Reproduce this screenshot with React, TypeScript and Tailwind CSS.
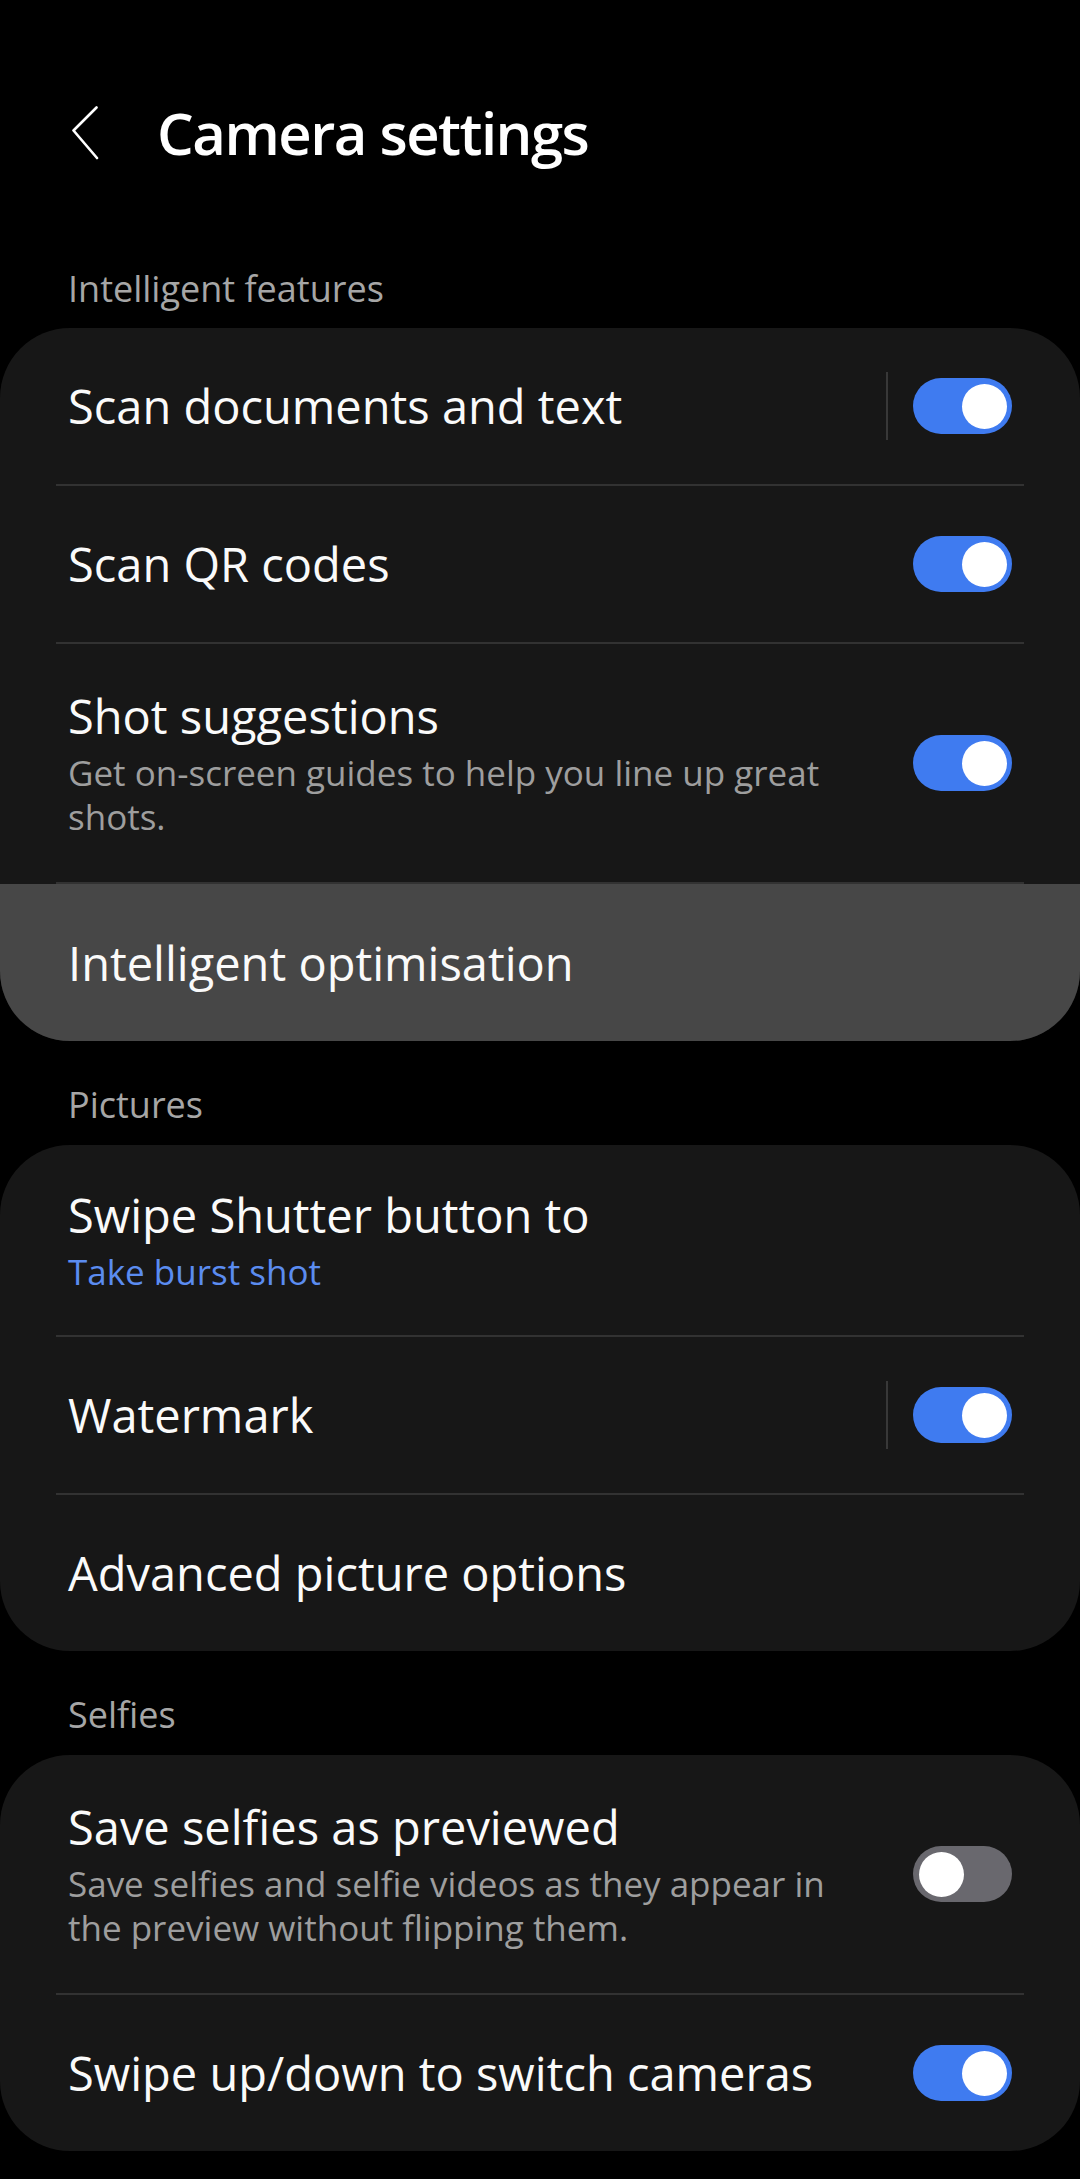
import React from "react";

function Toggle({ on }: { on: boolean }) {
  return on ? (
    <div className="flex h-[56px] w-[99px] shrink-0 items-center justify-end rounded-full bg-[#3f7bf0] pr-[5px]">
      <div className="h-[45px] w-[45px] rounded-full bg-white" />
    </div>
  ) : (
    <div className="flex h-[56px] w-[99px] shrink-0 items-center justify-start rounded-full bg-[#69686e] pl-[6px]">
      <div className="h-[45px] w-[45px] rounded-full bg-white" />
    </div>
  );
}

function Divider() {
  return <div className="mx-[56px] h-[2px] bg-[#323232]" />;
}

function Header({ children, first }: { children: React.ReactNode; first?: boolean }) {
  return (
    <div
      className={
        first
          ? "px-[68px] pt-[98px] pb-[17px] text-[36px] leading-[44px] text-[#a6a6a6]"
          : "px-[68px] pt-[42px] pb-[18px] text-[36px] leading-[44px] text-[#a6a6a6]"
      }
    >
      {children}
    </div>
  );
}

function Row({
  title,
  sub,
  subBlue,
  toggle,
  sep,
  h,
  highlight,
}: {
  title: string;
  sub?: string[];
  subBlue?: string;
  toggle?: boolean;
  sep?: boolean;
  h: string;
  highlight?: boolean;
}) {
  return (
    <div className={`flex items-center px-[68px] ${h} ${highlight ? "bg-[#474747]" : ""}`}>
      <div className="flex min-w-0 flex-1 flex-col">
        <div className="text-[47px] leading-[56px] text-[#fafafa] whitespace-nowrap">{title}</div>
        {sub && (
          <div className="mt-[7px] text-[35px] leading-[44px] text-[#9e9e9e]">
            {sub.map((l) => (
              <div key={l} className="whitespace-nowrap">
                {l}
              </div>
            ))}
          </div>
        )}
        {subBlue && (
          <div className="mt-[7px] text-[35px] leading-[44px] text-[#5b8cf0] whitespace-nowrap">{subBlue}</div>
        )}
      </div>
      {sep && <div className="mr-[25px] h-[68px] w-[2px] bg-[#383838]" />}
      {toggle !== undefined && <Toggle on={toggle} />}
    </div>
  );
}

export default function App() {
  return (
    <div
      className="min-h-[2179px] w-[1080px] bg-black pt-[97px] pb-[30px]"
      style={{ fontFamily: '"Open Sans", "Noto Sans", sans-serif' }}
    >
      <div className="flex h-[72px] items-center pl-[72px]">
        <svg width="27" height="54" viewBox="0 0 27 54" fill="none" className="shrink-0">
          <path d="M24.5 1.5 L1.5 24.5 L25 52" stroke="#ffffff" strokeWidth="2.6" strokeLinecap="round" strokeLinejoin="round" />
        </svg>
        <div className="ml-[58px] text-[58px] font-semibold leading-[72px] tracking-[-1.5px] text-white whitespace-nowrap">
          Camera settings
        </div>
      </div>

      <Header first>Intelligent features</Header>
      <div className="overflow-hidden rounded-[70px] bg-[#171717]">
        <Row title="Scan documents and text" toggle={true} sep h="h-[156px]" />
        <Divider />
        <Row title="Scan QR codes" toggle={true} h="h-[156px]" />
        <Divider />
        <Row
          title="Shot suggestions"
          sub={["Get on-screen guides to help you line up great", "shots."]}
          toggle={true}
          h="h-[238px]"
        />
        <Divider />
        <Row title="Intelligent optimisation" h="h-[157px]" highlight />
      </div>

      <Header>Pictures</Header>
      <div className="overflow-hidden rounded-[70px] bg-[#171717]">
        <Row title="Swipe Shutter button to" subBlue="Take burst shot" h="h-[190px]" />
        <Divider />
        <Row title="Watermark" toggle={true} sep h="h-[156px]" />
        <Divider />
        <Row title="Advanced picture options" h="h-[156px]" />
      </div>

      <Header>Selfies</Header>
      <div className="overflow-hidden rounded-[70px] bg-[#171717]">
        <Row
          title="Save selfies as previewed"
          sub={["Save selfies and selfie videos as they appear in", "the preview without flipping them."]}
          toggle={false}
          h="h-[238px]"
        />
        <Divider />
        <Row title="Swipe up/down to switch cameras" toggle={true} h="h-[156px]" />
      </div>
    </div>
  );
}
